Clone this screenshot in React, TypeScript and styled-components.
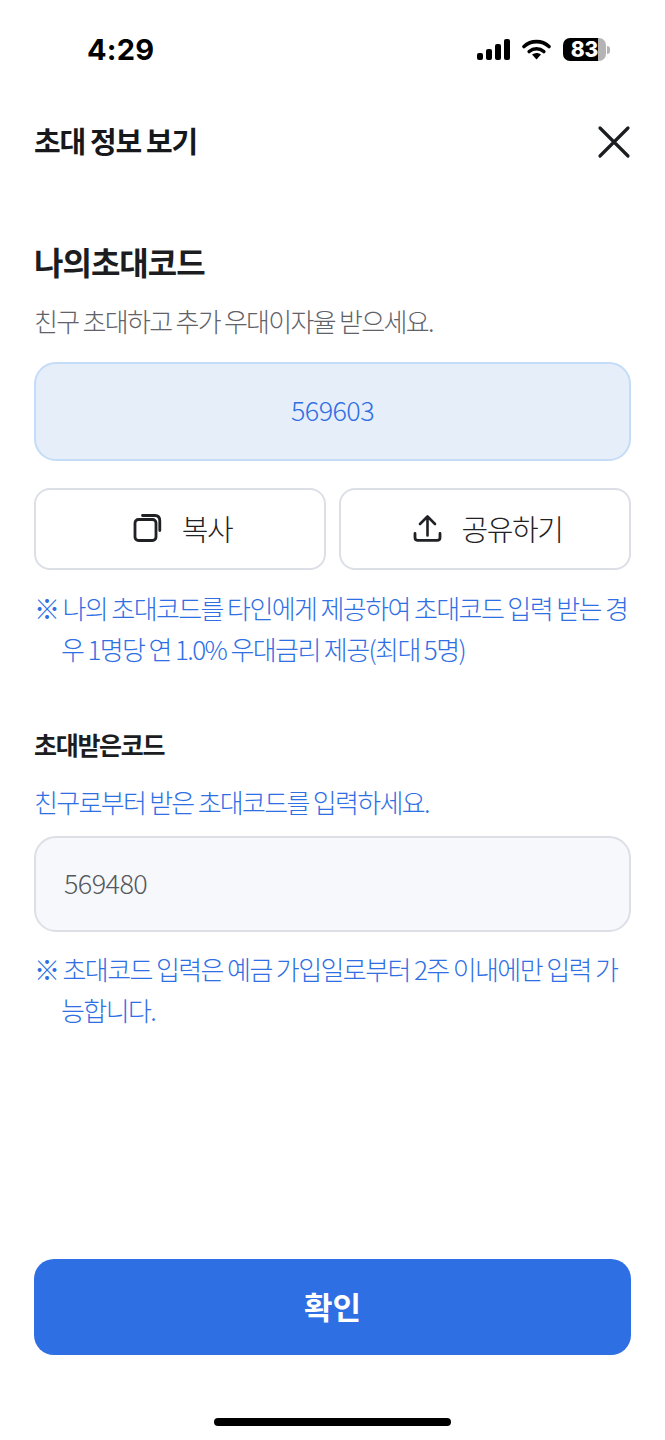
import styled, { createGlobalStyle } from "styled-components";

const GlobalStyle = createGlobalStyle`
  html, body {
    margin: 0;
    padding: 0;
    background: #ffffff;
  }
  * {
    box-sizing: border-box;
  }
`

const Page = styled.div`
  width: 665px;
  height: 1440px;
  display: flex;
  flex-direction: column;
  overflow: hidden;
  background: #ffffff;
  font-family: "Noto Sans CJK KR", "Noto Sans", sans-serif;
  color: #1b1d21;
`

const StatusBar = styled.div`
  height: 99px;
  flex: none;
  display: flex;
  justify-content: space-between;
  align-items: center;
  padding: 0 55px 0 87px;
`

const Time = styled.span`
  font-family: Inter, sans-serif;
  font-size: 29px;
  font-weight: 700;
  letter-spacing: 0.2px;
  color: #000000;
`

const StatusIcons = styled.div`
  display: flex;
  align-items: center;
  gap: 12px;
`

const Battery = styled.div`
  width: 43px;
  height: 23px;
  border-radius: 7px;
  overflow: hidden;
  background: linear-gradient(to right, #000000 82%, #b4b4b4 82%);
  display: flex;
  align-items: center;
  justify-content: center;
  font-family: Inter, sans-serif;
  font-size: 21px;
  font-weight: 800;
  color: #ffffff;
`

const BatteryWrap = styled.div`
  display: flex;
  align-items: center;
  gap: 1px;
`

const BatteryCap = styled.div`
  width: 3px;
  height: 8px;
  border-radius: 0 3px 3px 0;
  background: #b4b4b4;
`

const Header = styled.div`
  height: 85px;
  flex: none;
  display: flex;
  justify-content: space-between;
  align-items: center;
  padding: 0 34px;
`

const HeaderTitle = styled.h1`
  margin: 0 0 3px;
  font-size: 29px;
  font-weight: 700;
  letter-spacing: -1.3px;
  color: #16181b;
`

const CloseButton = styled.button`
  width: 34px;
  height: 34px;
  padding: 0;
  border: none;
  background: none;
  display: flex;
`

const Content = styled.div`
  flex: 1;
  display: flex;
  flex-direction: column;
  padding: 0 34px;
`

const SectionTitle = styled.h2`
  margin: 54px 0 0;
  font-size: 32px;
  line-height: 46px;
  font-weight: 700;
  letter-spacing: -1px;
  color: #1b1d21;
`

const SubTitle = styled.h3<{ $top: number }>`
  margin: ${p => p.$top}px 0 0;
  font-size: 25px;
  line-height: 38px;
  font-weight: 700;
  letter-spacing: -1.3px;
  color: #1b1d21;
`

const Description = styled.p<{ $blue?: boolean; $top: number }>`
  margin: ${p => p.$top}px 0 0;
  font-size: 26px;
  line-height: 40px;
  font-weight: 300;
  letter-spacing: -1.7px;
  color: ${p => (p.$blue ? "#2f6fe4" : "#5f6268")};
`

const CodeBox = styled.div`
  margin-top: 21px;
  height: 99px;
  padding-bottom: 4px;
  display: flex;
  align-items: center;
  justify-content: center;
  background: #e6eefa;
  border: 2px solid #c4dcf8;
  border-radius: 22px;
  font-size: 27px;
  font-weight: 300;
  letter-spacing: -0.6px;
  color: #2f6fe4;
`

const ButtonRow = styled.div`
  margin-top: 27px;
  display: grid;
  grid-template-columns: 1fr 1fr;
  gap: 13px;
`

const ActionButton = styled.button`
  height: 82px;
  display: flex;
  align-items: center;
  justify-content: center;
  gap: 19px;
  padding: 0 0 2px 5px;
  background: #ffffff;
  border: 2px solid #dcdfe6;
  border-radius: 16px;
  font-family: inherit;
  font-size: 29px;
  font-weight: 300;
  letter-spacing: -1.4px;
  color: #1f2124;
`

const Note = styled.p<{ $top: number }>`
  margin: ${p => p.$top}px 0 0;
  padding-left: 27px;
  text-indent: -27px;
  font-size: 26px;
  line-height: 41px;
  font-weight: 300;
  letter-spacing: -1.6px;
  color: #2f6fe4;
`

const InputBox = styled.div`
  margin-top: 14px;
  height: 96px;
  display: flex;
  align-items: center;
  padding: 0 0 4px 28px;
  background: #f7f8fb;
  border: 2px solid #dcdfe6;
  border-radius: 22px;
  font-size: 27px;
  font-weight: 300;
  letter-spacing: -0.6px;
  color: #55585e;
`

const Footer = styled.div`
  flex: none;
  padding: 0 34px;
  display: flex;
  flex-direction: column;
  align-items: center;
`

const ConfirmButton = styled.button`
  width: 100%;
  height: 96px;
  padding: 0 0 3px;
  border: none;
  border-radius: 20px;
  background: #2f6fe4;
  font-family: inherit;
  font-size: 31px;
  font-weight: 700;
  color: #ffffff;
`

const HomeIndicator = styled.div`
  margin: 63px 0 14px;
  width: 237px;
  height: 8px;
  border-radius: 4px;
  background: #000000;
`

const App = () => {
  return (
    <>
      <GlobalStyle />
      <Page>
        <StatusBar>
          <Time>4:29</Time>
          <StatusIcons>
            <svg width="33" height="21" viewBox="0 0 33 21">
              <rect x="0" y="14" width="6" height="7" rx="2" fill="#000" />
              <rect x="9" y="10" width="6" height="11" rx="2" fill="#000" />
              <rect x="18" y="5" width="6" height="16" rx="2" fill="#000" />
              <rect x="27" y="0" width="6" height="21" rx="2" fill="#000" />
            </svg>
            <svg width="29" height="21" viewBox="0 0 29 21" fill="none">
              <path d="M2 7.5C9 1 20 1 27 7.5" stroke="#000" strokeWidth="3.6" strokeLinecap="round" />
              <path d="M7.2 12.5C11.5 8.8 17.5 8.8 21.8 12.5" stroke="#000" strokeWidth="3.6" strokeLinecap="round" />
              <path d="M10 15.6C12.8 13.6 16.2 13.6 19 15.6L14.5 20.6Z" fill="#000" />
            </svg>
            <BatteryWrap>
              <Battery>83</Battery>
              <BatteryCap />
            </BatteryWrap>
          </StatusIcons>
        </StatusBar>
        <Header>
          <HeaderTitle>초대 정보 보기</HeaderTitle>
          <CloseButton>
            <svg width="34" height="34" viewBox="0 0 34 34" fill="none">
              <path d="M3 3L31 31M31 3L3 31" stroke="#1b1d21" strokeWidth="3.2" strokeLinecap="round" />
            </svg>
          </CloseButton>
        </Header>
        <Content>
          <SectionTitle>나의초대코드</SectionTitle>
          <Description $top={17}>친구 초대하고 추가 우대이자율 받으세요.</Description>
          <CodeBox>569603</CodeBox>
          <ButtonRow>
            <ActionButton>
              <svg width="30" height="30" viewBox="0 0 30 30" fill="none">
                <rect x="2" y="6.5" width="21" height="21" rx="3.5" stroke="#1f2124" strokeWidth="2.8" />
                <path d="M9.5 2.5H22C25.5 2.5 26.8 4.5 26.8 8V17.5" stroke="#1f2124" strokeWidth="2.8" strokeLinecap="round" />
              </svg>
              복사
            </ActionButton>
            <ActionButton>
              <svg width="30" height="30" viewBox="0 0 30 30" fill="none">
                <path d="M15.5 22.5V4M8 11L15.5 3.5L23 11" stroke="#1f2124" strokeWidth="2.6" strokeLinecap="round" strokeLinejoin="round" />
                <path d="M3 20.5V24.5C3 26.5 4 27.4 6 27.4H25C27 27.4 28 26.5 28 24.5V20.5" stroke="#1f2124" strokeWidth="2.8" strokeLinecap="round" />
              </svg>
              공유하기
            </ActionButton>
          </ButtonRow>
          <Note $top={17}>※ 나의 초대코드를 타인에게 제공하여 초대코드 입력 받는 경우 1명당 연 1.0% 우대금리 제공(최대 5명)</Note>
          <SubTitle $top={56}>초대받은코드</SubTitle>
          <Description $blue $top={19}>친구로부터 받은 초대코드를 입력하세요.</Description>
          <InputBox>569480</InputBox>
          <Note $top={16}>※ 초대코드 입력은 예금 가입일로부터 2주 이내에만 입력 가능합니다.</Note>
        </Content>
        <Footer>
          <ConfirmButton>확인</ConfirmButton>
          <HomeIndicator />
        </Footer>
      </Page>
    </>
  )
}

export default App
